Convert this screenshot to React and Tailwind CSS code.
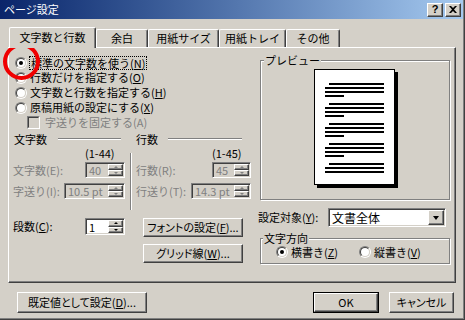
import React from "react";

const raised =
  "border border-t-white border-l-white border-r-[#404040] border-b-[#404040] shadow-[inset_-1px_-1px_0_#808080] bg-[#d4d0c8]";
const sunkenBorder =
  "border border-t-[#808080] border-l-[#808080] border-r-white border-b-white shadow-[inset_1px_1px_0_#404040,inset_-1px_-1px_0_#d4d0c8]";

function U({ children }) {
  return <span className="underline underline-offset-[1px]">{children}</span>;
}

function Radio({ checked }) {
  return (
    <div className="w-[12px] h-[12px] shrink-0 rounded-full border border-t-[#808080] border-l-[#808080] border-r-white border-b-white">
      <div className="w-full h-full rounded-full border border-t-[#404040] border-l-[#404040] border-r-[#d4d0c8] border-b-[#d4d0c8] bg-white flex items-center justify-center">
        {checked && <div className="w-[4px] h-[4px] rounded-full bg-black" />}
      </div>
    </div>
  );
}

function Checkbox() {
  return (
    <div className="w-[13px] h-[13px] shrink-0 border border-t-[#808080] border-l-[#808080] border-r-white border-b-white">
      <div className="w-full h-full border border-t-[#404040] border-l-[#404040] border-r-[#d4d0c8] border-b-[#d4d0c8] bg-[#d4d0c8]" />
    </div>
  );
}

function SpinButtons({ disabled }) {
  const up = disabled
    ? "w-0 h-0 border-l-[2px] border-r-[2px] border-b-[2px] border-l-transparent border-r-transparent border-b-[#808080]"
    : "w-0 h-0 border-l-[2px] border-r-[2px] border-b-[2px] border-l-transparent border-r-transparent border-b-black";
  const down = disabled
    ? "w-0 h-0 border-l-[2px] border-r-[2px] border-t-[2px] border-l-transparent border-r-transparent border-t-[#808080]"
    : "w-0 h-0 border-l-[2px] border-r-[2px] border-t-[2px] border-l-transparent border-r-transparent border-t-black";
  return (
    <div className="flex flex-col w-[15px] h-full shrink-0">
      <div className={raised + " flex-1 flex items-center justify-center"}>
        <div className={up} />
      </div>
      <div className={raised + " flex-1 flex items-center justify-center"}>
        <div className={down} />
      </div>
    </div>
  );
}

function Spin({ wClass, hClass, value, disabled }) {
  return (
    <div
      className={
        sunkenBorder +
        " " +
        wClass +
        " " +
        hClass +
        (disabled ? " bg-[#d4d0c8] text-[#808080]" : " bg-white text-black") +
        " flex items-stretch p-[1px]"
      }
    >
      <div className="flex-1 flex items-center pl-[2px] leading-[12px] text-[11px] whitespace-nowrap">{value}</div>
      <SpinButtons disabled={disabled} />
    </div>
  );
}

function Button({ className, children }) {
  return (
    <div
      className={
        raised +
        " flex items-center justify-center leading-[13px] whitespace-nowrap [font-feature-settings:'palt'] " +
        className
      }
    >
      {children}
    </div>
  );
}

function PaperLine({ kind }) {
  if (kind === "indent") return <div className="ml-[14px] w-[55px] h-[2px] bg-black" />;
  if (kind === "short") return <div className="ml-[10px] w-[19px] h-[2px] bg-black" />;
  return <div className="ml-[10px] w-[59px] h-[2px] bg-black" />;
}

function ParaGroup({ last }) {
  return (
    <div className="flex flex-col gap-[2px]">
      <PaperLine kind="indent" />
      <PaperLine kind="full" />
      <PaperLine kind="full" />
      {!last && <PaperLine kind="short" />}
    </div>
  );
}

const tabBase =
  "h-[18px] rounded-t-[2px] border-t border-l border-r border-t-white border-l-white border-r-[#404040] shadow-[inset_-1px_0_0_#808080] flex justify-center pt-[2px] leading-[13px]";

export default function App() {
  return (
    <div className="w-[465px] h-[320px] bg-[#d4d0c8] relative overflow-hidden font-['Noto_Sans_CJK_JP',sans-serif] text-[11px] text-black whitespace-nowrap border-r border-b border-r-[#404040] border-b-[#404040] shadow-[inset_-1px_-1px_0_#808080]">
      {/* Title bar */}
      <div className="w-[463px] h-[19px] flex items-center justify-between pl-[4px] pr-[2px] bg-linear-to-r from-[#0a246a] to-[#a6caf0]">
        <span className="text-white text-[11px] leading-[13px]">ページ設定</span>
        <div className="flex gap-[2px] items-center">
          <div className={raised + " w-[16px] h-[14px] flex items-center justify-center"}>
            <span className="font-['Liberation_Sans',sans-serif] font-bold text-[11px] leading-[11px]">?</span>
          </div>
          <div className={raised + " w-[16px] h-[14px] flex items-center justify-center"}>
            <svg width="8" height="7" viewBox="0 0 8 7">
              <path d="M0 0h2l2 2 2-2h2L5 3.5 8 7H6L4 5 2 7H0l3-3.5z" fill="#000" />
            </svg>
          </div>
        </div>
      </div>

      {/* Tabs */}
      <div className="flex items-end h-[20px] mt-[8px] pl-[9px]">
        <div className="relative z-10 -mb-[1px] w-[87px] h-[21px] bg-[#d4d0c8] rounded-t-[2px] border-t border-l border-r border-t-white border-l-white border-r-[#404040] shadow-[inset_-1px_0_0_#808080] flex justify-center pt-[3px] leading-[13px]">
          文字数と行数
        </div>
        <div className={tabBase + " w-[52px]"}>余白</div>
        <div className={tabBase + " w-[71px]"}>用紙サイズ</div>
        <div className={tabBase + " w-[67px]"}>用紙トレイ</div>
        <div className={tabBase + " w-[54px]"}>その他</div>
      </div>

      {/* Panel */}
      <div className="relative ml-[8px] w-[448px] h-[236px] border border-t-white border-l-white border-r-[#404040] border-b-[#404040] shadow-[inset_-1px_-1px_0_#808080] flex">
        {/* Left column */}
        <div className="w-[249px] flex flex-col">
          <div className="pt-[7px] pl-[6px] flex flex-col leading-[13px]">
            <div className="h-[15px] flex items-center gap-[2px]">
              <Radio checked />
              <span className="border border-dotted border-black px-[1px] leading-[12px]">
                標準の文字数を使う(<U>N</U>)
              </span>
            </div>
            <div className="h-[15px] flex items-center gap-[3px]">
              <Radio />
              <span>
                行数だけを指定する(<U>O</U>)
              </span>
            </div>
            <div className="h-[15px] flex items-center gap-[3px]">
              <Radio />
              <span>
                文字数と行数を指定する(<U>H</U>)
              </span>
            </div>
            <div className="h-[15px] flex items-center gap-[3px]">
              <Radio />
              <span>
                原稿用紙の設定にする(<U>X</U>)
              </span>
            </div>
            <div className="h-[15px] flex items-center gap-[5px] pl-[12px] text-[#808080]">
              <Checkbox />
              <span>字送りを固定する(A)</span>
            </div>
          </div>

          {/* Section headers */}
          <div className="mt-[2px] pl-[4px] flex h-[14px] leading-[13px]">
            <div className="w-[117px] flex items-center pl-[1px]">
              <span>文字数</span>
              <div className="flex-1 h-0 ml-[11px] mr-[9px] border-t border-b border-t-[#808080] border-b-white" />
            </div>
            <div className="w-[2px]" />
            <div className="w-[119px] flex items-center pl-[4px]">
              <span>行数</span>
              <div className="flex-1 h-0 ml-[10px] mr-[9px] border-t border-b border-t-[#808080] border-b-white" />
            </div>
          </div>

          {/* Section bodies */}
          <div className="pl-[4px] flex h-[64px] leading-[13px]">
            <div className="w-[117px] flex flex-col pr-[5px]">
              <div className="h-[14px] flex items-center pl-[72px]">(1-44)</div>
              <div className="mt-[2px] h-[16px] flex items-center justify-between text-[#808080]">
                <span>文字数(E):</span>
                <Spin wClass="w-[40px]" hClass="h-[16px]" value="40" disabled />
              </div>
              <div className="mt-[5px] h-[16px] flex items-center justify-between text-[#808080]">
                <span>字送り(I):</span>
                <Spin wClass="w-[61px]" hClass="h-[16px]" value="10.5 pt" disabled />
              </div>
            </div>
            <div className="w-0 mt-[7px] border-l border-r border-l-[#808080] border-r-white" />
            <div className="w-[119px] flex flex-col pl-[4px]">
              <div className="h-[14px] flex items-center pl-[76px]">(1-45)</div>
              <div className="mt-[2px] h-[16px] flex items-center justify-between text-[#808080]">
                <span>行数(R):</span>
                <Spin wClass="w-[39px]" hClass="h-[16px]" value="45" disabled />
              </div>
              <div className="mt-[5px] h-[16px] flex items-center justify-between text-[#808080]">
                <span>行送り(T):</span>
                <Spin wClass="w-[60px]" hClass="h-[16px]" value="14.3 pt" disabled />
              </div>
            </div>
          </div>

          {/* Bottom-left controls */}
          <div className="mt-[8px] pl-[4px] flex items-start leading-[13px]">
            <div className="w-[117px] h-[17px] flex items-center justify-between pr-[5px]">
              <span>
                段数(<U>C</U>):
              </span>
              <Spin wClass="w-[40px]" hClass="h-[17px]" value="1" />
            </div>
            <div className="ml-[13px] flex flex-col gap-[7px]">
              <Button className="w-[100px] h-[19px]">
                フォントの設定(<U>F</U>)...
              </Button>
              <Button className="w-[100px] h-[19px]">
                グリッド線(<U>W</U>)...
              </Button>
            </div>
          </div>
        </div>

        {/* Right column */}
        <div className="flex flex-col leading-[13px]">
          <div className="relative ml-[2px] mt-[12px] w-[190px] h-[140px] border border-[#808080] shadow-[inset_1px_1px_0_#fff,1px_1px_0_#fff]">
            <span className="absolute left-[3px] -top-[7px] px-[1px] bg-[#d4d0c8] leading-[13px]">プレビュー</span>
            <div className="ml-[53px] mt-[8px] w-[81px] h-[116px] bg-white border border-black shadow-[3px_3px_0_#000] pt-[13px] flex flex-col gap-[6px]">
              <ParaGroup />
              <ParaGroup />
              <ParaGroup />
              <ParaGroup />
              <ParaGroup last />
            </div>
          </div>

          <div className="mt-[8px] flex items-center h-[19px]">
            <span className="w-[70px]">
              設定対象(<U>Y</U>):
            </span>
            <div className={sunkenBorder + " w-[118px] h-[19px] bg-white flex items-stretch p-[1px]"}>
              <div className="flex-1 flex items-center pl-[2px] text-[12px] leading-[13px]">文書全体</div>
              <div className={raised + " w-[16px] flex items-center justify-center"}>
                <div className="w-0 h-0 border-l-[3.5px] border-r-[3.5px] border-t-[4px] border-l-transparent border-r-transparent border-t-black" />
              </div>
            </div>
          </div>

          <div className="relative ml-[2px] mt-[11px] w-[190px] h-[26px] border border-[#808080] shadow-[inset_1px_1px_0_#fff,1px_1px_0_#fff] flex items-center pl-[15px] pt-[2px]">
            <span className="absolute left-[2px] -top-[7px] px-[1px] bg-[#d4d0c8] leading-[13px]">文字方向</span>
            <div className="w-[83px] flex items-center gap-[3px]">
              <Radio checked />
              <span>
                横書き(<U>Z</U>)
              </span>
            </div>
            <div className="flex items-center gap-[3px]">
              <Radio />
              <span>
                縦書き(<U>V</U>)
              </span>
            </div>
          </div>
        </div>
      </div>

      {/* Bottom buttons */}
      <div className="mt-[9px] flex items-center">
        <Button className="ml-[17px] w-[130px] h-[21px]">
          既定値として設定(<U>D</U>)...
        </Button>
        <div className="ml-auto w-[66px] h-[21px] border border-black">
          <Button className="w-full h-full">OK</Button>
        </div>
        <Button className="ml-[10px] mr-[10px] w-[65px] h-[21px]">キャンセル</Button>
      </div>

      {/* Red circle annotation */}
      <svg className="absolute left-0 top-[40px]" width="45" height="45" viewBox="0 0 45 45">
        <circle cx="21.5" cy="21.5" r="16.5" fill="none" stroke="#f00000" strokeWidth="4" />
      </svg>
    </div>
  );
}
